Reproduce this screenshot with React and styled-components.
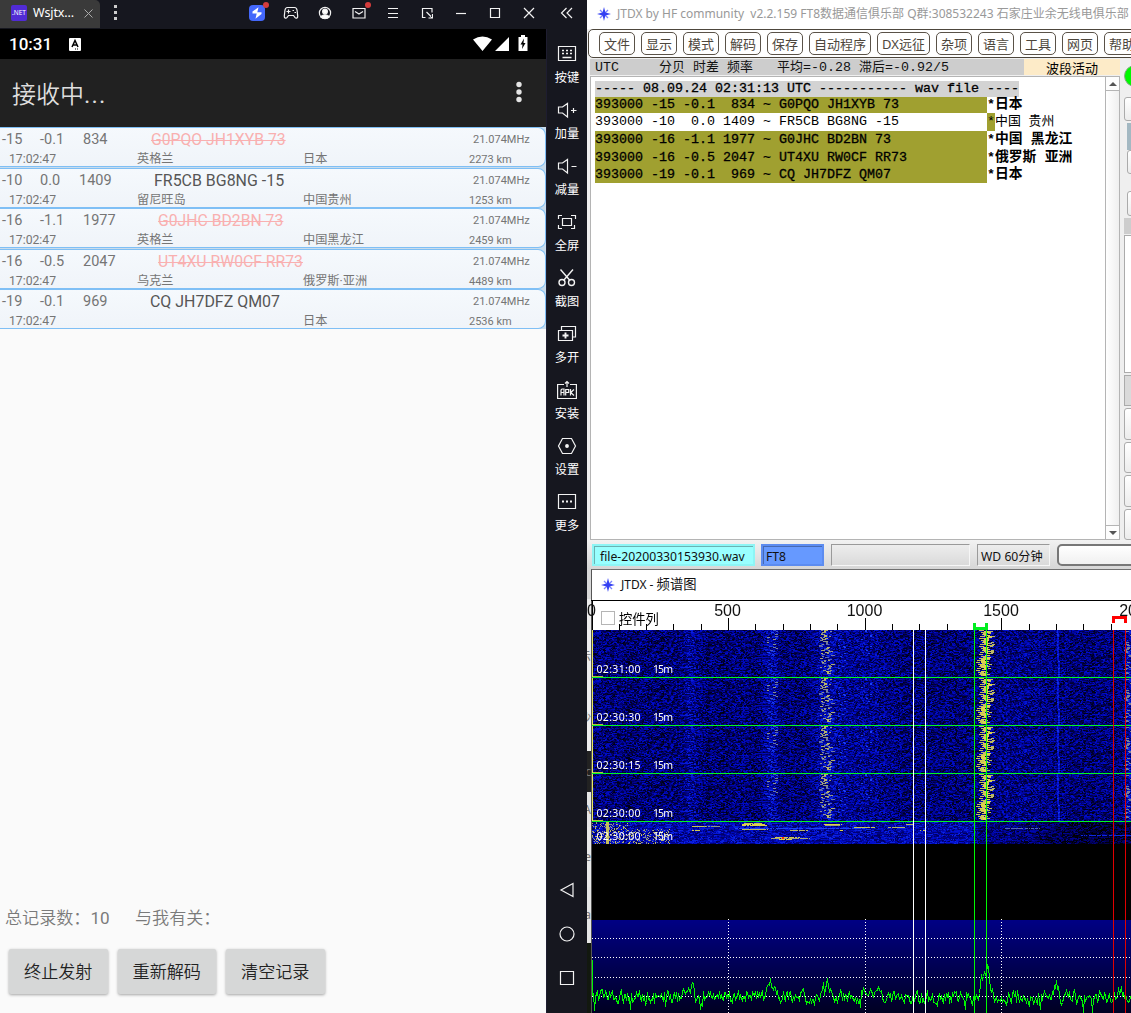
import React, { useLayoutEffect, useRef } from "react";
import styled, { createGlobalStyle, css } from "styled-components";

const Global = createGlobalStyle`
  * { box-sizing: border-box; }
  html, body { margin: 0; padding: 0; overflow: hidden; background: #fff; }
  svg, canvas { display: block; }
`;

const cjk = '"Noto Sans CJK SC", sans-serif';
const roboto = `Roboto, ${cjk}`;
const ui = `"Noto Sans", ${cjk}`;
const mono = `"Liberation Mono", "Noto Sans CJK SC", monospace`;

const Desktop = styled.div`
  display: flex;
  width: 1131px;
  height: 1013px;
  overflow: hidden;
  background: #16171f;
`;

/* ---------- emulator ---------- */
const Emulator = styled.section`
  flex: 0 0 587px;
  min-width: 0;
  display: flex;
  flex-direction: column;
  background: #16171f;
`;
const TabBar = styled.header`
  display: flex;
  height: 29px;
  align-items: flex-start;
`;
const Tab = styled.div`
  display: flex;
  align-items: center;
  width: 100px;
  height: 28px;
  padding: 0 0 2px 11px;
  background: #3a3a3a;
  border-radius: 0 5px 0 0;
  color: #fff;
  font: 12.5px/26px ${ui};
`;
const NetLogo = styled.span`
  width: 16px;
  height: 16px;
  border-radius: 2px;
  background: #512bd4;
  color: #fff;
  font: 6.5px/16px ${ui};
  text-align: center;
  margin-right: 6px;
`;
const TabTitle = styled.span`
  width: 51px;
  letter-spacing: -0.1px;
`;
const TabMenu = styled.div`
  width: 30px;
  padding: 4px 0 0 12px;
`;
const TopIcons = styled.div`
  display: flex;
  margin-left: 110px;
`;
const TopSlot = styled.div`
  position: relative;
  width: ${(p) => p.$w || 34}px;
  height: 28px;
  display: flex;
  align-items: center;
  justify-content: center;
  padding-bottom: 3px;
`;
const Dot = styled.i`
  position: absolute;
  top: 2px;
  left: 23px;
  width: 6px;
  height: 6px;
  border-radius: 50%;
  background: #d43c3c;
`;
const EmuBody = styled.div`
  flex: 1;
  display: flex;
`;
const Phone = styled.main`
  width: 546px;
  display: flex;
  flex-direction: column;
  background: #fafafa;
  font-family: ${roboto};
`;
const StatusBar = styled.div`
  display: flex;
  align-items: center;
  height: 30px;
  padding: 0 18px 0 9px;
  background: #000;
  color: #fff;
  font-size: 17px;
  font-weight: 500;
`;
const Clock = styled.span`
  width: 60px;
`;
const StatusIcons = styled.div`
  display: flex;
  margin-left: auto;
  align-items: center;
`;
const AppBar = styled.div`
  display: flex;
  align-items: center;
  justify-content: space-between;
  height: 68px;
  padding: 0 22px 2px 12px;
  background: #212121;
  color: #dedede;
  font-size: 24px;
  font-weight: 350;
`;
const Dots = styled.span`
  font-weight: 400;
  letter-spacing: 1.2px;
`;
const RecordList = styled.div`
  display: flex;
  flex-direction: column;
  gap: 0.6px;
  background: #c9dcec;
`;
const Record = styled.article`
  height: 40px;
  border: 1px solid #7fbff5;
  border-left: 0;
  border-radius: 0 8px 8px 0;
  background: linear-gradient(#f5f9fd, #f0f4f9);
  color: #757575;
`;
const RecTop = styled.div`
  display: grid;
  grid-template-columns: 38px 39px 57px 1fr 72px;
  height: 22px;
  padding-left: 2px;
  font-size: 14.5px;
  line-height: 24px;
`;
const RecBottom = styled.div`
  display: grid;
  grid-template-columns: 128px 166px 1fr 76px;
  padding-left: 9px;
  font-size: 12.2px;
  line-height: 19px;
`;
const Small = styled.span`
  font-size: 11px;
`;
const Freq = styled.span`
  padding-left: ${(p) => p.$x || 0}px;
`;
const Call = styled.span`
  padding-left: ${(p) => p.$x}px;
  font-size: 15.95px;
  line-height: 23px;
  color: #565656;
`;
const Struck = styled.del`
  color: #f9b0b0;
  font-size: 15.75px;
  text-decoration: line-through 1px;
`;
const Totals = styled.div`
  display: flex;
  margin-top: auto;
  padding-left: 5px;
  color: #7a7a7a;
  font-size: 17.1px;
  line-height: 24px;
  font-weight: 350;
`;
const Total = styled.span`
  width: 130px;
  white-space: nowrap;
`;
const Count = styled.span`
  font-weight: 400;
`;
const Actions = styled.div`
  display: flex;
  gap: 10px;
  padding: 19px 0 19px 9px;
`;
const ActionButton = styled.button`
  width: 98.5px;
  height: 45px;
  padding: 0;
  border: 0;
  border-radius: 2px;
  background: #d6d7d7;
  box-shadow: 0 1px 3px rgba(0, 0, 0, 0.35);
  color: #222;
  font: 350 17.1px/44px ${roboto};
`;
const Sidebar = styled.aside`
  width: 41px;
  display: flex;
  flex-direction: column;
  align-items: center;
  padding-top: 2px;
  border-left: 1px solid #1e1d30;
`;
const Tool = styled.div`
  display: flex;
  flex-direction: column;
  align-items: center;
  height: 56px;
  padding-top: 12px;
  color: #fff;
  font: 12.2px/18px ${cjk};
`;
const ToolIcon = styled.div`
  height: 25px;
  padding-bottom: 3px;
  display: flex;
  align-items: center;
`;
const NavKeys = styled.nav`
  display: flex;
  flex-direction: column;
  gap: 28px;
  margin-top: auto;
  padding-bottom: 27px;
`;

/* ---------- JTDX ---------- */
const Workspace = styled.section`
  flex: 1;
  min-width: 0;
  display: flex;
  flex-direction: column;
  background: #efefef;
`;
const TitleBar = styled.header`
  display: flex;
  align-items: center;
  height: ${(p) => p.$h}px;
  padding: 0 0 ${(p) => p.$pb}px ${(p) => p.$x}px;
  gap: 6px;
  background: #fff;
  color: ${(p) => p.$color};
  font: 12px/24px ${ui};
  white-space: pre;
`;
const WideHan = styled.span`
  font-size: 13.3px;
`;
const MenuBar = styled.nav`
  display: flex;
  gap: 6px;
  height: 29px;
  margin: 0 -10px 0 1px;
  padding: 2px 0 0 10px;
  border: 1px solid #4d463c;
  border-radius: 5px;
  background: #fff;
  overflow: hidden;
`;
const MenuItem = styled.div`
  flex: 0 0 ${(p) => p.$w}px;
  height: 23px;
  border: 1px solid #5a5248;
  border-radius: 5px;
  color: #4d463c;
  font: 13px/22px ${ui};
  text-align: center;
  white-space: nowrap;
`;
const JtdxBody = styled.div`
  display: flex;
  height: 482px;
  padding: 1px 0 0 3px;
`;
const Activity = styled.div`
  width: 530px;
  display: flex;
  flex-direction: column;
`;
const ColumnHeads = styled.div`
  display: flex;
  height: 16px;
  margin-bottom: 1px;
`;
const Heads = styled.div`
  width: 434px;
  padding-left: 5px;
  background: #cdcdcd;
  color: #111;
  font: 13.33px/18px ${mono};
  white-space: pre;
`;
const Han = styled.span`
  display: inline-block;
  height: 16px;
  vertical-align: top;
  font: 12.9px/14px ${cjk};
  width: 26px;
`;
const Band = styled.div`
  flex: 1;
  background: #fdebc8;
  font: 13px/17px ${cjk};
  text-align: center;
`;
const Decodes = styled.div`
  flex: 1;
  display: flex;
  border: 1px solid #b4b4b4;
  background: #fff;
`;
const Lines = styled.div`
  flex: 1;
  padding: 4px 0 0 4px;
  color: #000;
  font: 13.33px/17px ${mono};
  white-space: pre;
`;
const Line = styled.div`
  display: flex;
  height: ${(p) => p.$h}px;
  line-height: ${(p) => p.$h}px;
`;
const Message = styled.span`
  width: ${(p) => p.$w}px;
  background: ${(p) => p.$bg};
  -webkit-text-stroke: ${(p) => (p.$firm ? 0.3 : 0)}px #000;
`;
const Star = styled.span`
  width: 8px;
  font-weight: ${(p) => (p.$on ? "normal" : "bold")};
  background: ${(p) => (p.$on ? "#a0a030" : "transparent")};
`;
const Country = styled.span`
  font-size: ${(p) => (p.$bold ? 13.8 : 12.9)}px;
  font-weight: ${(p) => (p.$bold ? "bold" : "normal")};
  line-height: ${(p) => p.$h - 1}px;
`;
const Scroll = styled.div`
  width: 14px;
  display: flex;
  flex-direction: column;
  justify-content: space-between;
  border-left: 1px solid #b4b4b4;
  background: linear-gradient(90deg, #fff, #efefef);
`;
const ScrollKey = styled.div`
  display: flex;
  align-items: center;
  justify-content: center;
  height: 14px;
  background: #fdfdfd;
  border-${(p) => p.$edge}: 1px solid #b4b4b4;
  &::after {
    content: "";
    border: 4px solid transparent;
    border-${(p) => p.$edge}-color: #555;
    border-${(p) => (p.$edge === "bottom" ? "top" : "bottom")}-width: 0;
  }
`;
const Controls = styled.div`
  flex: 1;
  overflow: hidden;
  display: flex;
  flex-direction: column;
  padding: 6px 0 0 4px;
`;
const Lamp = styled.div`
  flex: 0 0 22px;
  width: 22px;
  border-radius: 50%;
  border: 1px solid #8aa88a;
  background: #00f900;
`;
const Field = styled.div`
  flex: 0 0 ${(p) => p.$h}px;
  width: 60px;
  margin-top: ${(p) => p.$mt}px;
  margin-left: ${(p) => p.$ml || 0}px;
  ${(p) =>
    p.$flat
      ? css`
          background: ${p.$flat};
          ${p.$edge && "border: 1px solid #ababab;"}
        `
      : css`
          border: 1px solid #ababab;
          border-radius: 3px;
          background: linear-gradient(#fff, #ececec);
        `}
`;
const Footer = styled.div`
  display: flex;
  height: 29px;
  align-items: flex-start;
  padding: 4px 0 0 5px;
  background: linear-gradient(#f2f2f2, #d6d6d6);
  font: 12.2px/24px ${ui};
  color: #111;
`;
const StatusCell = styled.div`
  flex: 0 0 ${(p) => p.$w}px;
  height: 22px;
  margin-right: ${(p) => p.$mr}px;
  padding-left: ${(p) => p.$x || 4}px;
  background: ${(p) => p.$bg || "transparent"};
  border: 1px solid #f6f6f6;
  border-top-color: #9a9a9a;
  border-left-color: #9a9a9a;
  ${(p) =>
    p.$tint &&
    css`
      border: 2px solid ${p.$tint};
      box-shadow: inset 1px 1px 0 rgba(0, 0, 0, 0.3);
      line-height: 22px;
    `}
  white-space: nowrap;
`;
const Progress = styled.div`
  flex: 0 0 120px;
  height: 22px;
  border: 2px solid #777;
  border-radius: 5px;
  background: linear-gradient(#fff, #f0f0f0);
`;

/* ---------- spectrum window ---------- */
const Lower = styled.div`
  flex: 1;
  display: flex;
  background: #16171f;
`;
const Behind = styled.div`
  width: 4px;
  display: flex;
  flex-direction: column;
  background: #ececec;
`;
const BehindPart = styled.div`
  flex: 0 0 ${(p) => p.$h}px;
  overflow: hidden;
  background: ${(p) => p.$bg};
  color: #777;
  font: 12px/${(p) => p.$h}px ${ui};
  direction: rtl;
`;
const Spectrum = styled.div`
  flex: 1;
  min-width: 0;
  display: flex;
  flex-direction: column;
  border-top: 1px solid #707070;
  border-left: 1px solid #555;
`;
const Plot = styled.div`
  display: grid;
  background: #000;
  height: 413px;
  & > * { grid-area: 1 / 1; }
`;
const WaterCanvas = styled.canvas`
  margin-top: 30px;
`;
const Overlay = styled.svg`
  z-index: 1;
  overflow: visible;
`;
const Toggle = styled.label`
  z-index: 2;
  display: flex;
  align-self: start;
  justify-self: start;
  margin: 11px 0 0 9px;
  gap: 4px;
  font: 13.3px/15px ${cjk};
`;
const Box = styled.span`
  width: 14px;
  height: 14px;
  border: 1px solid #b5b5b5;
  background: #fff;
`;

const decodes = [
  ["-15", "-0.1", "834", 4, "G0PQO JH1XYB 73", 17, "英格兰", "日本", "2273 km", true],
  ["-10", "0.0", "1409", 0, "FR5CB BG8NG -15", 20, "留尼旺岛", "中国贵州", "1253 km", false],
  ["-16", "-1.1", "1977", 4, "G0JHC BD2BN 73", 24, "英格兰", "中国黑龙江", "2459 km", true],
  ["-16", "-0.5", "2047", 4, "UT4XU RW0CF RR73", 24, "乌克兰", "俄罗斯·亚洲", "4489 km", true],
  ["-19", "-0.1", "969", 4, "CQ JH7DFZ QM07", 16, "", "日本", "2536 km", false],
];

const menu = [
  ["文件", 36], ["显示", 36], ["模式", 36], ["解码", 36], ["保存", 36], ["自动程序", 62],
  ["DX远征", 53], ["杂项", 36], ["语言", 36], ["工具", 36], ["网页", 36], ["帮助", 36],
];

const lines = [
  ["393000 -15 -0.1  834 ~ G0PQO JH1XYB 73", "日本", 16, true],
  ["393000 -10  0.0 1409 ~ FR5CB BG8NG -15", "中国 贵州", 18, false],
  ["393000 -16 -1.1 1977 ~ G0JHC BD2BN 73", "中国 黑龙江", 18, true],
  ["393000 -16 -0.5 2047 ~ UT4XU RW0CF RR73", "俄罗斯 亚洲", 18, true],
  ["393000 -19 -0.1  969 ~ CQ JH7DFZ QM07", "日本", 16, true],
];

const Stroke = ({ w = 20, h = 20, sw = 1.2, children }) => (
  <svg width={w} height={h} viewBox={`0 0 ${w} ${h}`} fill="none" stroke="#f2f2f2" strokeWidth={sw}>
    {children}
  </svg>
);

const topIcons = [
  [<svg width="16" height="16" viewBox="0 0 16 16"><rect width="16" height="16" rx="4" fill="#4468fb" /><path d="M9.5 2.200 3.500 6.500v2h4.200L6.500 13.800l6-4.800V7.200H8.300z" fill="#fff" /></svg>, true],
  [<Stroke w={16} h={14}><path d="M4.500 1.500h7c1.800 0 2.400 1.300 2.600 3l.6 5.500c.2 2.400-1.700 2.800-2.800 1.400L10.500 9.500h-5l-1.400 1.900C3 12.800 1.100 12.400 1.300 10l.6-5.500c.2-1.700.8-3 2.600-3zM3.500 5.500h4M5.500 3.500v4M9.500 4.500h1.500M11.500 6.500H13" /></Stroke>],
  [<Stroke w={14} h={14}><circle cx="7" cy="7" r="5.600" /><circle cx="7" cy="5.500" r="2.400" fill="#fff" /><path d="M3 11c1-3 7-3 8 0-2 2-6 2-8 0z" fill="#fff" /></Stroke>],
  [<Stroke w={14} h={12}><path d="M1 1.500h12v9.500H1zM3 4.500l4 2.500 4-2.500" /></Stroke>, true],
  [<Stroke w={12} h={12}><path d="M1 1.500h10M1 6.500h10M1 10.500h10" /></Stroke>],
  [<Stroke w={12} h={12}><path d="M4.500 10.500h-3v-9h9.500v4M5.500 5l5.500 5.500M11.500 7v4h-4" /></Stroke>],
  [<Stroke w={12} h={12}><path d="M1 6.500h10" /></Stroke>],
  [<Stroke w={12} h={12}><path d="M1.500 1.500h9v9h-9z" /></Stroke>],
  [<Stroke w={12} h={12}><path d="m1 1 10 10M11 1 1 11" /></Stroke>],
];

const tools = [
  ["按键", <Stroke><path d="M1.500 2.500h17v14h-17z" /><path d="M5 6.500h2m2 0h2m2 0h2M5 9.500h2m2 0h2m2 0h2M5.500 13.500h9" strokeWidth="1.500" /></Stroke>],
  ["加量", <Stroke><path d="M1.500 7v6h4l5 4V3.500L5.500 7zM14 10.500h5.500M16.500 8v5" /></Stroke>],
  ["减量", <Stroke><path d="M1.500 7v6h4l5 4V3.500L5.500 7zM14.500 10.500h5" /></Stroke>],
  ["全屏", <Stroke><path d="M5.500 6.500h9v7h-9zM1.500 7V3.500H5M14 3.500h4.500V7M17.500 13v3.500H14M5 16.500H1.500V13" /></Stroke>],
  ["截图", <Stroke sw={1.400}><path d="m3.500 1.500 9.500 11M16 1.500 6.500 12.500" /><circle cx="5" cy="14.500" r="3" /><circle cx="14.500" cy="14.500" r="3" /></Stroke>],
  ["多开", <Stroke><path d="M1.500 6.500h14v10h-14zM4.500 6V2.500h14v10.500H16" /><path d="M5.500 11.500h6m-3-3v6" strokeWidth="1.900" /></Stroke>],
  ["安装", <Stroke><path d="M7 4.500H.6v14h18.800v-14H13M10 7V1.500M8 3.500l2-2 2 2M4 15.500V10l1-1h2v6.500m-3-3h3M8.700 15.500V9.500h3v3h-3M13.500 9v6.500m3.500-6-3.300 3 3.300 3" /></Stroke>],
  ["设置", <Stroke><path d="m5.500 2.500-4 7.500 4 7.500h9l4-7.500-4-7.500z" /><circle cx="10" cy="10" r="1.300" fill="#fff" /></Stroke>],
  ["更多", <Stroke><path d="M1.500 2.500h17v14h-17z" /><path d="M5 9.500h2m2 0h2m2 0h2" strokeWidth="1.800" /></Stroke>],
];

const JtdxMark = () => (
  <svg width="14" height="14" viewBox="0 0 14 14" fill="none">
    <path d="m3 3 8 8M11 3l-8 8" stroke="#7b84ff" strokeWidth="1.300" />
    <path d="m7 0 1.400 5.600L14 7 8.400 8.400 7 14 5.600 8.400 0 7l5.600-1.400z" fill="#3440f2" />
  </svg>
);

function makeRandom(seed) {
  let s = seed;
  return () => {
    s = (s * 1664525 + 1013904223) >>> 0;
    return s / 4294967296;
  };
}

function palette(v) {
  if (v < 0.6) return [0, Math.max(0, v - 0.35) * 50, Math.max(0, v) * 345];
  if (v < 0.86) {
    const t = (v - 0.6) / 0.26;
    return [t * 30, 12 + t * 60, 207 + t * 40];
  }
  const t = Math.min(1, (v - 0.86) / 0.14);
  return [60 + t * 160, 80 + t * 130, 200 - t * 125];
}

/* One period of the fall is 48 rows; it repeats until the newest block. */
function paintFall(canvas) {
  const X0 = 592;
  const W = 539;
  const H = 214;
  const ctx = canvas.getContext("2d");
  const img = ctx.createImageData(W, H);
  const rand = makeRandom(77);
  const period = [];
  for (let y = 0; y < 48; y++) {
    const row = new Float32Array(W);
    let n = 0;
    let noise = 0;
    for (let x = 0; x < W; x++) {
      if (n <= 0) {
        noise = rand();
        n = 1 + Math.floor(rand() * 2);
      }
      n--;
      const px = x + X0;
      let v = 0.05 + noise * 0.56;
      const glow = (c, w, a) => { v += a * Math.exp(-((px - c) ** 2) / (2 * w * w)); };
      glow(690, 5, 0.12);
      glow(771, 5, 0.16);
      glow(826, 8, 0.13);
      glow(840, 10, 0.06);
      glow(868, 12, 0.08);
      glow(1020, 25, 0.05);
      glow(1129, 4, 0.2);
      if (px > 1056 + y / 30 && px < 1058 + y / 30) v = 0.5 + noise * 0.3;
      row[x] = v;
    }
    const mark = (x, len, v) => {
      for (let i = 0; i < len; i++) {
        const k = Math.round(x - X0 + i);
        if (k >= 0 && k < W) row[k] = v;
      }
    };
    if (y < 25 && rand() < 0.75) mark(765 + rand() * 11, 1 + rand() * 2, 0.82 + rand() * 0.12);
    if (y < 44) {
      mark(819 + rand() * 12, 1 + rand() * 3, 0.88 + rand() * 0.1);
      if (rand() < 0.35) mark(820 + rand() * 12, 2, 0.93);
      if (rand() < 0.22) mark(838 + rand() * 8, 2, 0.84);
    }
    if (y < 30 && rand() < 0.35) mark(859 + rand() * 14, 2, 0.84);
    if (y < 46) {
      const base = y < 28 ? 979 : 976;
      const hop = [0, 4, 1, 6, 3, 7, 2, 5][(y * 3) % 8];
      mark(base + hop, 3 + rand() * 3, 0.98);
      if (rand() < 0.8) mark(base + 4 + rand() * 6, 2 + rand() * 3, 1);
      if (rand() < 0.45) mark(base + 9 + rand() * 4, 3, 0.97);
    }
    if (rand() < 0.4) mark(1124 + rand() * 6, 3, 0.91);
    period.push(row);
  }
  for (let y = 0; y < 192; y++) {
    for (let x = 0; x < W; x++) {
      const c = palette(period[y % 48][x]);
      const o = (y * W + x) * 4;
      img.data[o] = c[0];
      img.data[o + 1] = c[1];
      img.data[o + 2] = c[2];
      img.data[o + 3] = 255;
    }
  }
  const bursts = [
    [1, 744, 762, 0.98], [2, 742, 765, 1], [3, 742, 768, 1], [4, 700, 720, 0.93], [2, 824, 842, 1], [3, 825, 840, 0.95],
    [6, 735, 865, 0.84], [7, 742, 768, 0.97], [5, 854, 875, 0.98], [5, 888, 905, 0.96], [8, 692, 700, 0.99],
    [8, 790, 808, 0.97], [15, 775, 800, 0.99], [16, 770, 810, 0.95], [17, 779, 792, 1], [2, 906, 913, 0.97],
    [6, 1005, 1040, 0.88], [8, 920, 925, 0.98], [13, 1080, 1131, 0.72], [8, 840, 843, 1], [4, 692, 706, 0.98],
  ];
  for (let y = 192; y < H; y++) {
    let noise = 0;
    for (let x = 0; x < W; x++) {
      if (rand() < 0.6) noise = rand();
      const px = x + X0;
      let v = 0.25 + noise * 0.48;
      if (px > 975) v -= 0.14;
      if (px > 1010) v -= (Math.min(px, 1090) - 1010) * 0.0025;
      if (px < 670 && rand() < 0.22 && (y > 198 || px < 630)) v = 0.9 + rand() * 0.1;
      if (px > 605 && px < 609) v = 0.98;
      bursts.forEach(([r, a, b, l]) => {
        if (y - 192 === r && px >= a && px < b && rand() < 0.88) v = l;
      });
      const c = palette(v);
      const o = (y * W + x) * 4;
      img.data[o] = c[0];
      img.data[o + 1] = c[1];
      img.data[o + 2] = c[2];
      img.data[o + 3] = 255;
    }
  }
  ctx.putImageData(img, 0, 0);
  ctx.fillStyle = "#ff2a00";
  ctx.fillRect(190, 207, 2, 2);
}

function tracePath() {
  const rand = makeRandom(9);
  const peaks = [[691, 11, 2], [771, 13, 3], [826, 14, 3], [863, 8, 2], [877, 7, 4], [984, 26, 3], [988, 14, 2], [1056, 13, 2], [1120, 5, 3]];
  let d = "M592.5 960V996";
  let hold = 0;
  for (let x = 593; x < 1131; x++) {
    hold = hold * 0.3 + (rand() - 0.5) * 13;
    let y = 996.5 + hold;
    if (rand() < 0.05) y += 8;
    peaks.forEach(([c, a, w]) => { y -= a * Math.exp(-((x - c) ** 2) / (2 * w * w)); });
    if (x === 1083) y = 1012;
    if (x === 965) y = 1009;
    d += `L${x + 0.5} ${Math.round(y) + 0.5}`;
  }
  return d;
}

const trace = tracePath();
const ticks = Array.from({ length: 19 }, (_, i) => i + 1);

function SpectrumPlot() {
  const ref = useRef(null);
  useLayoutEffect(() => paintFall(ref.current), []);
  return (
    <Plot>
      <WaterCanvas ref={ref} width="539" height="214" />
      <Overlay width="539" height="413" viewBox="592 600 539 413" shapeRendering="crispEdges">
        <defs>
          <linearGradient id="deep" x1="0" y1="0" x2="0" y2="1">
            <stop offset="0" stopColor="#000084" />
            <stop offset="1" stopColor="#000022" />
          </linearGradient>
        </defs>
        <rect x="592" y="600" width="539" height="30" fill="#fff" />
        <path d="M591 600.500H1131M592.500 600V630" stroke="#000" />
        <path d={ticks.map((i) => `M${Math.round(591.5 + i * 27.33) + 0.5} 630V${i % 5 ? 624 : 618}`).join("")} stroke="#000" />
        <g fontFamily="Liberation Sans, Arial, sans-serif" fontSize="16" textAnchor="middle" fill="#111">
          <text x="591.500" y="616">0</text>
          <text x="727.500" y="616">500</text>
          <text x="864.500" y="616">1000</text>
          <text x="1001" y="616">1500</text>
          <text x="1137" y="616">2000</text>
        </g>
        <rect x="592" y="920" width="539" height="93" fill="url(#deep)" />
        <path d="M592 938.500H1131M592 957.500H1131M592 977.500H1131M592 996.500H1131M728.500 919V1013M865.500 919V1013M1001.500 919V1013" stroke="#fff" strokeDasharray="1 2" />
        <path d={trace} fill="none" stroke="#00f400" />
        <path d="M592.500 630V821" stroke="#e8e860" />
        <path d="M592 677.500H1131M592 725.500H1131M592 773.500H1131M592 821.500H1131" stroke="#00f820" />
        <path d="M593 676.500h10M593 724.500h10M593 772.500h10M593 820.500h10" stroke="#b8b840" />
        <path d="M913.500 630V1013M925.500 630V1013" stroke="#fff" />
        <path d="M974.500 630V1013M986.500 630V1013" stroke="#00f800" />
        <path d="M1113.500 630V1013M1125.500 630V1013" stroke="#e00000" />
        <path d="M974.500 623V630M986.500 623V630M974 628.500H987" stroke="#00ee20" strokeWidth="3" />
        <path d="M1113.500 623V617.500H1125.500V623" fill="none" stroke="#f00" strokeWidth="3" />
        <g fontFamily="Noto Sans, sans-serif" fontSize="10.500" fill="#fff">
          {[[673, "02:31:00"], [721, "02:30:30"], [769, "02:30:15"], [817, "02:30:00"], [840, "02:30:00"]].map(([y, t]) => (
            <React.Fragment key={y}>
              <text x="596.500" y={y} textLength="44">{t}</text>
              <text x="653" y={y} textLength="20">15m</text>
            </React.Fragment>
          ))}
        </g>
      </Overlay>
      <Toggle><Box />控件列</Toggle>
    </Plot>
  );
}

export default function App() {
  return (
    <Desktop>
      <Global />
      <Emulator>
        <TabBar>
          <Tab>
            <NetLogo>.NET</NetLogo>
            <TabTitle>Wsjtx...</TabTitle>
            <svg width="9" height="9" viewBox="0 0 9 9" stroke="#aaa" fill="none"><path d="m.5.5 8 8m0-8-8 8" /></svg>
          </Tab>
          <TabMenu>
            <svg width="6" height="18" viewBox="0 0 6 18" fill="#ccc"><path d="M2 1h3v3H2zM2 7h3v3H2zM2 13h3v3H2z" /></svg>
          </TabMenu>
          <TopIcons>
            {topIcons.map(([icon, dot], i) => (
              <TopSlot key={i}>{icon}{dot && <Dot />}</TopSlot>
            ))}
            <TopSlot $w={41}>
              <Stroke w={14} h={12}><path d="M6.500 1 1.500 6l5 5M12 1 7 6l5 5" /></Stroke>
            </TopSlot>
          </TopIcons>
        </TabBar>
        <EmuBody>
          <Phone>
            <StatusBar>
              <Clock>10:31</Clock>
              <svg width="12" height="13" viewBox="0 0 12 13"><rect width="12" height="13" rx="1" fill="#fff" /><path d="M3 9 6 2.500 9 9M4 7h4" stroke="#000" strokeWidth="1.500" fill="none" /><path d="M6 11h1m1 0h1" stroke="#000" /></svg>
              <StatusIcons>
                <svg width="55" height="18" viewBox="0 0 55 18" fill="#fff">
                  <path d="M0 4.500Q9.500-1.500 19 4.500L9.500 16zM22 16 36 2v14z" />
                  <path d="M46 2h2V0h4v2h2.500v14H45.500V2z" />
                  <path d="M51 3.500 47.500 9.500h2L49 14l3.500-6h-2z" fill="#000" />
                </svg>
              </StatusIcons>
            </StatusBar>
            <AppBar>
              <span>接收中<Dots>...</Dots></span>
              <svg width="10" height="22" viewBox="0 0 10 22" fill="#e4e4e4"><circle cx="5" cy="3.500" r="2.700" /><circle cx="5" cy="11" r="2.700" /><circle cx="5" cy="18.500" r="2.700" /></svg>
            </AppBar>
            <RecordList>
              {decodes.map(([snr, dt, df, dx, call, cx, from, to, dist, struck], i) => (
                <Record key={i}>
                  <RecTop>
                    <span>{snr}</span>
                    <span>{dt}</span>
                    <Freq $x={dx}>{df}</Freq>
                    <Call $x={cx - 2}>{struck ? <Struck>{call}</Struck> : call}</Call>
                    <Small>21.074MHz</Small>
                  </RecTop>
                  <RecBottom>
                    <span>17:02:47</span>
                    <span>{from}</span>
                    <span>{to}</span>
                    <Small>{dist}</Small>
                  </RecBottom>
                </Record>
              ))}
            </RecordList>
            <Totals>
              <Total>总记录数：<Count>10</Count></Total>
              <span>与我有关：</span>
            </Totals>
            <Actions>
              <ActionButton>终止发射</ActionButton>
              <ActionButton>重新解码</ActionButton>
              <ActionButton>清空记录</ActionButton>
            </Actions>
          </Phone>
          <Sidebar>
            {tools.map(([label, icon]) => (
              <Tool key={label}>
                <ToolIcon>{icon}</ToolIcon>
                {label}
              </Tool>
            ))}
            <NavKeys>
              <Stroke w={16} h={16}><path d="M14 1.500v13L2 8z" /></Stroke>
              <Stroke w={16} h={16}><circle cx="8" cy="8" r="7" /></Stroke>
              <Stroke w={16} h={16}><path d="M1.500 1.500h13v13h-13z" /></Stroke>
            </NavKeys>
          </Sidebar>
        </EmuBody>
      </Emulator>
      <Workspace>
        <TitleBar $h={29} $x={10} $pb={2} $color="#999">
          <JtdxMark />
          <span>{"JTDX by HF community  v2.2.159 FT8数据通信俱乐部 Q群:308532243 石家庄业余无线电俱乐部"}</span>
        </TitleBar>
        <MenuBar>
          {menu.map(([label, w]) => <MenuItem key={label} $w={w}>{label}</MenuItem>)}
        </MenuBar>
        <JtdxBody>
          <Activity>
            <ColumnHeads>
              <Heads>
                {"UTC     "}<Han>分贝</Han> <Han>时差</Han> <Han>频率</Han>{"   "}<Han>平均</Han>=-0.28 <Han>滞后</Han>=-0.92/5
              </Heads>
              <Band>波段活动</Band>
            </ColumnHeads>
            <Decodes>
              <Lines>
                <Line $h={16}><Message $firm $w={424} $bg="#d3d3d3">{"----- 08.09.24 02:31:13 UTC ----------- wav file ----"}</Message></Line>
                {lines.map(([text, place, h, hit]) => (
                  <Line key={text} $h={h}>
                    <Message $firm={hit} $w={392} $bg={hit ? "#a0a030" : "#fff"}>{text}</Message>
                    <Star $on={!hit}>*</Star>
                    <Country $h={h} $bold={hit}>{place}</Country>
                  </Line>
                ))}
              </Lines>
              <Scroll><ScrollKey $edge="bottom" /><ScrollKey $edge="top" /></Scroll>
            </Decodes>
          </Activity>
          <Controls>
            <Lamp />
            <Field $h={24} $mt={10} />
            <Field $h={27} $mt={2} $ml={3} $flat="#a3b8c2" />
            <Field $h={24} $mt={0} $ml={3} />
            <Field $h={25} $mt={17} $ml={3} />
            <Field $h={16} $mt={2} $flat="#cdcdcd" />
            <Field $h={138} $mt={1} $flat="#fff" $edge />
            <Field $h={31} $mt={2} $flat="#dadada" $edge />
            <Field $h={32} $mt={2} />
            <Field $h={31} $mt={2} />
            <Field $h={32} $mt={2} />
            <Field $h={31} $mt={2} />
          </Controls>
        </JtdxBody>
        <Footer>
          <StatusCell $w={163} $mr={6} $x={6} $bg="#99ffff" $tint="#8df5f5">file-20200330153930.wav</StatusCell>
          <StatusCell $w={63} $mr={7} $x={3} $bg="#6699ff" $tint="#5c8cf0">FT8</StatusCell>
          <StatusCell $w={139} $mr={7} />
          <StatusCell $w={73} $mr={7} $x={3}>WD 60分钟</StatusCell>
          <Progress />
        </Footer>
        <Lower>
          <Behind>
            <BehindPart $h={30} $bg="#d8d8d8" />
            <BehindPart $h={30} $bg="#ececec" />
            <BehindPart $h={56} $bg="#eee">示</BehindPart>
            <BehindPart $h={66} $bg="#eee">沙</BehindPart>
            <BehindPart $h={41} $bg="#222">c</BehindPart>
            <BehindPart $h={35} $bg="#e6e6e6">A</BehindPart>
            <BehindPart $h={60} $bg="#e9e9e9">e</BehindPart>
            <BehindPart $h={56} $bg="#e6e6e6">a</BehindPart>
            <BehindPart $h={70} $bg="#12180f" />
          </Behind>
          <Spectrum>
            <TitleBar $h={30} $x={9} $pb={1} $color="#111">
              <JtdxMark />
              <span>JTDX - <WideHan>频谱图</WideHan></span>
            </TitleBar>
            <SpectrumPlot />
          </Spectrum>
        </Lower>
      </Workspace>
    </Desktop>
  );
}
